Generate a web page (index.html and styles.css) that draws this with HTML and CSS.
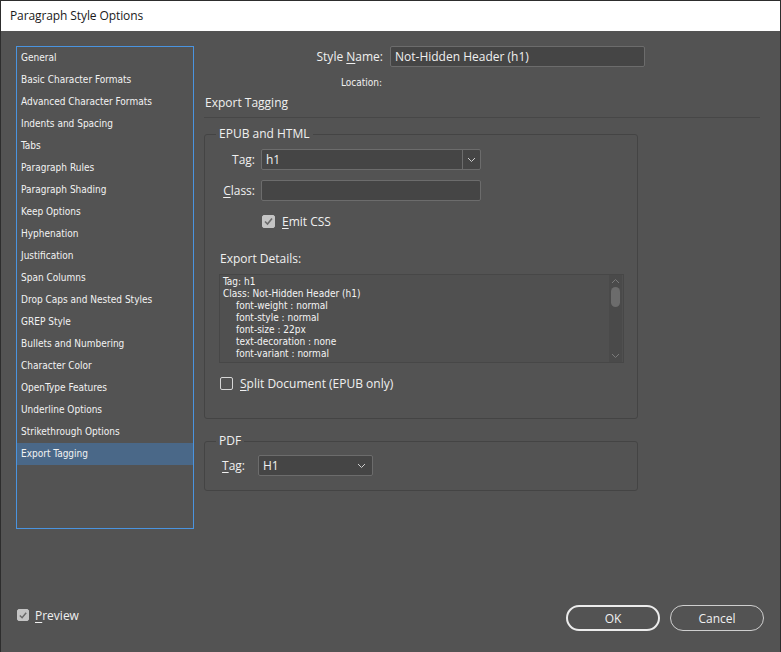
FILE: index.html
```html
<!DOCTYPE html>
<html>
<head>
<meta charset="utf-8">
<link rel="stylesheet" href="styles.css">
</head>
<body>
<div class="window">
  <div class="titlebar">Paragraph Style Options</div>
  <div class="dialog">
    <div class="content">
      <ul class="sidebar">
        <li>General</li>
        <li>Basic Character Formats</li>
        <li>Advanced Character Formats</li>
        <li>Indents and Spacing</li>
        <li>Tabs</li>
        <li>Paragraph Rules</li>
        <li>Paragraph Shading</li>
        <li>Keep Options</li>
        <li>Hyphenation</li>
        <li>Justification</li>
        <li>Span Columns</li>
        <li>Drop Caps and Nested Styles</li>
        <li>GREP Style</li>
        <li>Bullets and Numbering</li>
        <li>Character Color</li>
        <li>OpenType Features</li>
        <li>Underline Options</li>
        <li>Strikethrough Options</li>
        <li class="selected">Export Tagging</li>
      </ul>
      <div class="main">
        <div class="name-row">
          <span class="name-label">Style <u>N</u>ame:</span>
          <div class="field name-field">Not-Hidden Header (h1)</div>
        </div>
        <div class="location-row"><span class="name-label small">Location:</span></div>
        <div class="section-title">Export Tagging</div>
        <div class="separator"></div>

        <fieldset class="group epub">
          <legend>EPUB and HTML</legend>
          <div class="row first">
            <span class="row-label">Ta<u>g</u>:</span>
            <div class="field combo">
              <span class="combo-text">h1</span>
              <span class="combo-btn">
                <svg width="9" height="6" viewBox="0 0 9 6"><polyline points="1,1 4.5,4.5 8,1" fill="none" stroke="#cfcfcf" stroke-width="1"/></svg>
              </span>
            </div>
          </div>
          <div class="row">
            <span class="row-label"><u>C</u>lass:</span>
            <div class="field combo"></div>
          </div>
          <label class="check emit">
            <span class="box checked">
              <svg width="11" height="11" viewBox="0 0 11 11"><polyline points="2,5.5 4.5,8 9,2.5" fill="none" stroke="#6a6a6a" stroke-width="1.6"/></svg>
            </span>
            <span><u>E</u>mit CSS</span>
          </label>
          <div class="details-label">Export Details:</div>
          <div class="details">
            <div class="details-text">
              <div>Tag: h1</div>
              <div>Class: Not-Hidden Header (h1)</div>
              <div class="prop">font-weight : normal</div>
              <div class="prop">font-style : normal</div>
              <div class="prop">font-size : 22px</div>
              <div class="prop">text-decoration : none</div>
              <div class="prop">font-variant : normal</div>
            </div>
            <div class="scrollbar">
              <svg class="arrow" width="9" height="6" viewBox="0 0 9 6"><polyline points="1,5 4.5,1.5 8,5" fill="none" stroke="#7a7a7a" stroke-width="1"/></svg>
              <div class="thumb"></div>
              <div class="track-fill"></div>
              <svg class="arrow" width="9" height="6" viewBox="0 0 9 6"><polyline points="1,1 4.5,4.5 8,1" fill="none" stroke="#7a7a7a" stroke-width="1"/></svg>
            </div>
          </div>
          <label class="check split">
            <span class="box"></span>
            <span><u>S</u>plit Document (EPUB only)</span>
          </label>
        </fieldset>

        <fieldset class="group pdf">
          <legend>PDF</legend>
          <div class="row pdf-row">
            <span class="row-label pdf-label"><u>T</u>ag:</span>
            <div class="field pdf-combo">
              <span class="combo-text">H1</span>
              <svg width="9" height="6" viewBox="0 0 9 6"><polyline points="1,1 4.5,4.5 8,1" fill="none" stroke="#cfcfcf" stroke-width="1"/></svg>
            </div>
          </div>
        </fieldset>
      </div>
    </div>
    <div class="footer">
      <label class="check preview">
        <span class="box checked">
          <svg width="11" height="11" viewBox="0 0 11 11"><polyline points="2,5.5 4.5,8 9,2.5" fill="none" stroke="#6a6a6a" stroke-width="1.6"/></svg>
        </span>
        <span><u>P</u>review</span>
      </label>
      <div class="buttons">
        <button class="btn primary">OK</button>
        <button class="btn">Cancel</button>
      </div>
    </div>
  </div>
</div>
</body>
</html>
```

FILE: styles.css
```css
* { box-sizing: border-box; }
html, body { margin: 0; padding: 0; }
body {
  width: 781px;
  height: 652px;
  overflow: hidden;
  background: #535353;
  font-family: "Open Sans", "Liberation Sans", sans-serif;
  font-size: 12px;
  color: #f0f0f0;
}
u { text-decoration: underline; text-underline-offset: 2px; }

.window {
  width: 781px;
  height: 652px;
  display: flex;
  flex-direction: column;
  border: 1px solid #2d2d2d;
  border-bottom: 0;
  background: #535353;
}
.titlebar {
  height: 30px;
  flex: none;
  background: #ffffff;
  color: #1a1a1a;
  font-size: 12px;
  line-height: 30px;
  padding-left: 9px;
  letter-spacing: -0.1px;
}
.dialog {
  flex: 1;
  display: flex;
  flex-direction: column;
  padding: 15px 16px 21px 15px;
}
.content {
  display: flex;
  gap: 10px;
}

/* sidebar */
.sidebar {
  list-style: none;
  margin: 0;
  padding: 0;
  width: 178px;
  height: 483px;
  border: 1px solid #4a94e0;
  font-family: "DejaVu Sans Condensed", "DejaVu Sans", sans-serif;
  font-size: 10px;
  color: #f2f2f2;
}
.sidebar li {
  height: 22px;
  line-height: 22px;
  padding-left: 4px;
  white-space: nowrap;
}
.sidebar li.selected { background: #4a6888; }

/* main panel */
.main {
  width: 556px;
  display: flex;
  flex-direction: column;
}
.name-row {
  display: flex;
  align-items: center;
  gap: 7px;
}
.name-label {
  width: 179px;
  text-align: right;
  font-size: 12px;
}
.name-label.small {
  font-size: 10px;
  font-family: "DejaVu Sans Condensed", "DejaVu Sans", sans-serif;
  padding-right: 1px;
}
.field {
  height: 21px;
  background: #454545;
  border: 1px solid #6c6c6c;
  border-radius: 2px;
}
.name-field {
  width: 255px;
  line-height: 19px;
  padding-left: 4px;
  font-size: 12px;
}
.location-row {
  margin-top: 10px;
  height: 12px;
  line-height: 12px;
  display: flex;
}
.section-title {
  margin-top: 6px;
  height: 16px;
  line-height: 16px;
  padding-left: 1px;
  font-size: 12px;
}
.separator {
  margin-top: 6px;
  height: 1px;
  background: #474747;
}

.group {
  margin: 8px 0 0 0;
  padding: 0;
  width: 434px;
  border: 1px solid #444444;
  border-radius: 3px;
  min-width: 0;
}
.group legend {
  margin-left: 11px;
  padding: 0 3px;
  font-size: 12px;
  line-height: 16px;
}
.epub { padding-bottom: 28px; }
.row {
  display: flex;
  align-items: center;
  gap: 6px;
  margin-top: 10px;
}
.row.first { margin-top: 7px; }
.row-label {
  width: 50px;
  text-align: right;
}
.combo {
  width: 220px;
  display: flex;
  align-items: stretch;
}
.combo-text {
  flex: 1;
  line-height: 19px;
  padding-left: 4px;
}
.combo-btn {
  width: 18px;
  border-left: 1px solid #6c6c6c;
  display: flex;
  align-items: center;
  justify-content: center;
}

.check {
  display: flex;
  align-items: center;
  gap: 7px;
  height: 14px;
}
.box {
  width: 13px;
  height: 13px;
  border: 1px solid #d0d0d0;
  border-radius: 2px;
  display: flex;
  align-items: center;
  justify-content: center;
}
.box.checked {
  background: #c4c4c4;
  border-color: #c4c4c4;
}
.emit {
  margin-top: 13px;
  margin-left: 57px;
}
.details-label {
  margin-top: 23px;
  padding-left: 15px;
  height: 16px;
  line-height: 16px;
}
.details {
  margin: 7px 0 0 14px;
  width: 405px;
  height: 89px;
  border: 1px solid #474747;
  background: #505050;
  display: flex;
}
.details-text {
  flex: 1;
  padding: 1px 0 0 3px;
  font-family: "DejaVu Sans Condensed", "DejaVu Sans", sans-serif;
  font-size: 10px;
  line-height: 12px;
  color: #f4f4f4;
}
.details-text .prop { padding-left: 13px; }
.scrollbar {
  width: 13px;
  margin-right: 1px;
  background: #4a4a4a;
  display: flex;
  flex-direction: column;
  align-items: center;
  padding: 3px 0 3px;
}
.scrollbar .arrow { flex: none; }
.thumb {
  margin-top: 3px;
  width: 9px;
  height: 20px;
  border-radius: 5px;
  background: #6c6c6c;
}
.track-fill { flex: 1; }
.split {
  margin: 13px 0 0 15px;
}
.split .box { border-color: #d6d6d6; }

.pdf { margin-top: 14px; padding-bottom: 14px; }
.pdf-row { margin-top: 6px; gap: 13px; }
.pdf-label {
  width: 40px;
}
.pdf-combo {
  width: 115px;
  display: flex;
  align-items: center;
  justify-content: space-between;
  padding-right: 6px;
}
.pdf-combo .combo-text { line-height: 19px; }

/* footer */
.footer {
  margin-top: auto;
  display: flex;
  align-items: center;
  justify-content: space-between;
  padding-left: 1px;
}
.preview { gap: 6px; margin-bottom: 6px; }
.preview .box { width: 12px; height: 12px; }
.buttons {
  display: flex;
  gap: 10px;
}
.btn {
  width: 94px;
  height: 26px;
  border-radius: 13px;
  border: 1px solid #cfcfcf;
  background: transparent;
  color: #f0f0f0;
  font-family: "Open Sans", "Liberation Sans", sans-serif;
  font-size: 12px;
  padding: 0;
}
.btn.primary {
  border: 2px solid #ececec;
}
```
